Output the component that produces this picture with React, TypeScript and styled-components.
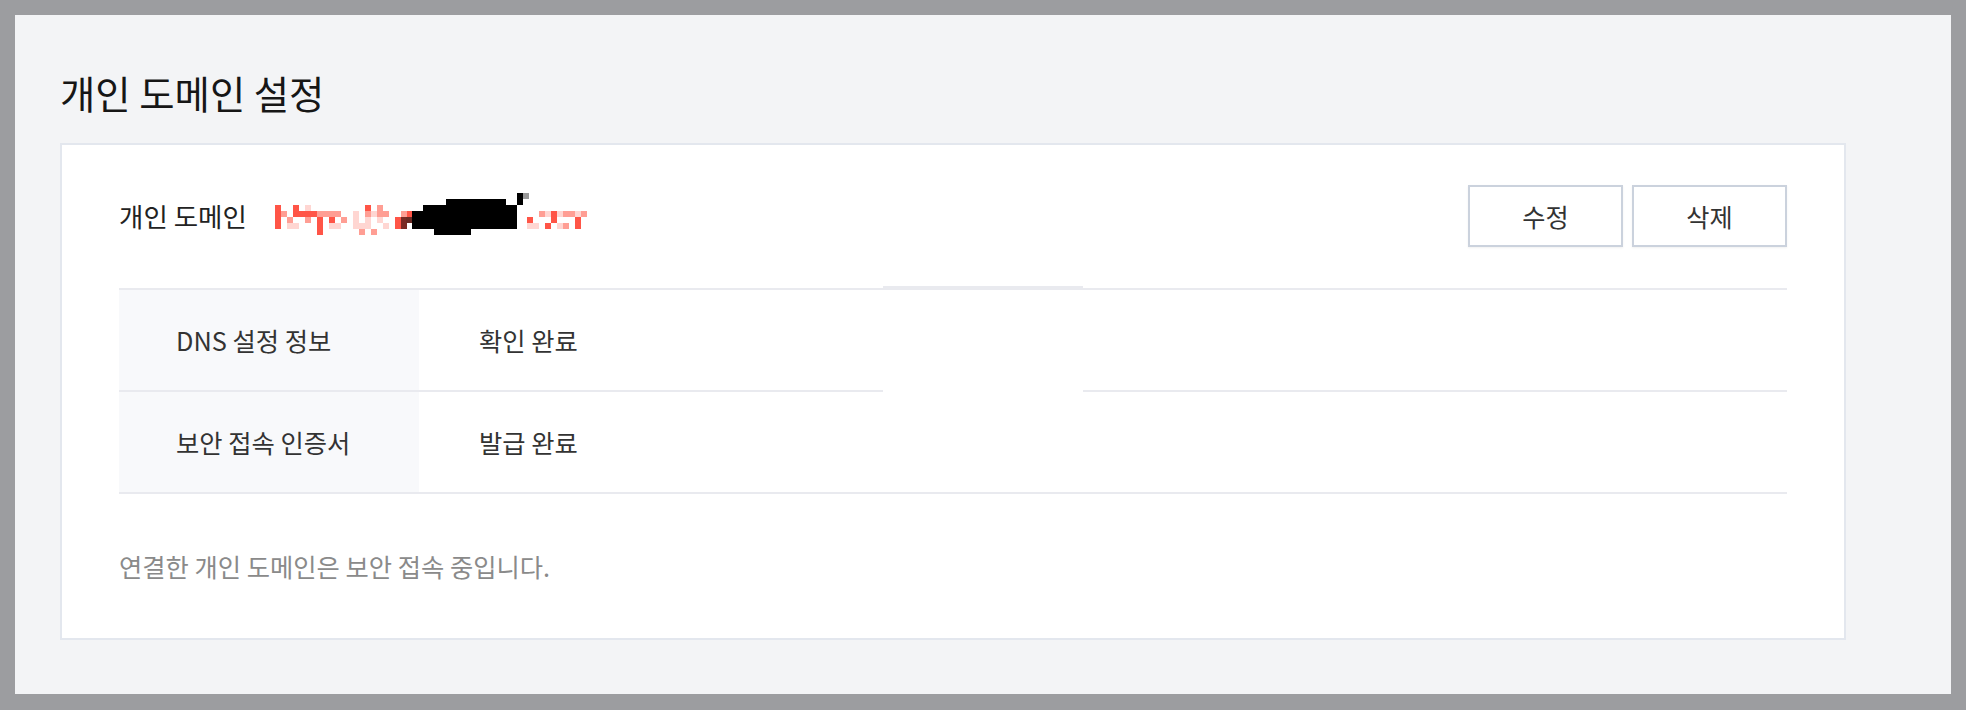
import React from "react";
import styled, { createGlobalStyle } from "styled-components";

const GlobalStyle = createGlobalStyle`
  html, body {
    margin: 0;
    padding: 0;
    background: #9c9da0;
  }
  body {
    font-family: "Noto Sans CJK KR", "Noto Sans", sans-serif;
    color: #333;
  }
  * { box-sizing: border-box; }
`;

const Frame = styled.main`
  margin: 15px 15px 16px 15px;
  height: 679px;
  background: #f3f4f6;
  padding: 49px 105px 0 45px;
`;

const Title = styled.h1`
  margin: 0;
  font-size: 38.4px;
  font-weight: 400;
  line-height: 56px;
  color: #161616;
`;

const Card = styled.section`
  position: relative;
  margin-top: 23px;
  height: 497px;
  background: #fff;
  border: 2px solid #e3e7ee;
  padding: 40px 57px 0 57px;
`;

const HeaderRow = styled.div`
  display: flex;
  align-items: center;
  justify-content: space-between;
  height: 62px;
`;

const DomainInfo = styled.div`
  display: flex;
  align-items: center;
  gap: 28px;
`;

const Label = styled.span`
  font-size: 26.5px;
  color: #222;
  line-height: 36px;
`;

const Actions = styled.div`
  display: flex;
  gap: 9px;
`;

const Button = styled.button`
  width: 155px;
  height: 62px;
  background: #fff;
  border: 2px solid #cbd2dd;
  box-shadow: 0 1px 2px rgba(0, 0, 0, 0.06);
  font-family: inherit;
  font-size: 25.2px;
  color: #333;
  cursor: pointer;
  padding: 0;
`;

const Table = styled.div`
  margin-top: 41px;
  border-top: 2px solid #e9eaef;
`;

const Row = styled.div`
  display: grid;
  grid-template-columns: 300px 1fr;
  height: 102px;
  border-bottom: 2px solid #e9eaef;
`;

const HeadCell = styled.div`
  display: flex;
  align-items: center;
  padding-left: 57px;
  background: #f8f9fb;
  font-size: 25.3px;
  color: #333;
`;

const ValueCell = styled.div`
  display: flex;
  align-items: center;
  padding-left: 60px;
  font-size: 25.3px;
  color: #333;
`;

const Note = styled.p`
  margin: 55px 0 0 0;
  font-size: 25.3px;
  line-height: 34px;
  color: #8a8a8a;
`;

const Patch = styled.div`
  position: absolute;
  left: 821px;
  top: 141px;
  width: 200px;
  height: 107px;
  background: #fff;
  border-top: 4px solid #e9eaef;
`;

const R = "#ff5547";
const Rm = "#ff9e94";
const P = "#ffd6d2";
const D = "#7a2a24";

const grid = [
  "R..R.p.........R.r..................................",
  "Rr.RRRRrrrr..p.rprr..rR.....................rpRprrpr",
  "R.r..r.R.R.r.p.p.p..RD....................R...R...R.",
  "R.pp...R.pp..ppp..p.RD....................pp.R.pr.R.",
  ".......R......r.r...................................",
];

const colorOf = (c: string) =>
  c === "R" ? R : c === "r" ? Rm : c === "p" ? P : c === "D" ? D : null;

const Redacted = () => {
  const cells: React.ReactNode[] = [];
  grid.forEach((row, ri) => {
    row.split("").forEach((ch, ci) => {
      const fill = colorOf(ch);
      if (fill) {
        cells.push(
          <rect key={`${ri}-${ci}`} x={ci * 6} y={12 + ri * 6} width={6} height={6} fill={fill} />
        );
      }
    });
  });
  return (
    <svg width="314" height="46" viewBox="0 0 314 46" aria-label="redacted domain">
      {cells}
      <rect x="171" y="6" width="60" height="6" fill="#000" />
      <rect x="148" y="12" width="94" height="6" fill="#000" />
      <rect x="137" y="18" width="105" height="18" fill="#000" />
      <rect x="159" y="36" width="37" height="6" fill="#000" />
      <rect x="242" y="0" width="6" height="12" fill="#000" />
      <rect x="248" y="0" width="6" height="6" fill="#999" />
      <rect x="131" y="24" width="6" height="6" fill="#6b2a24" />
    </svg>
  );
};

const rows = [
  { head: "DNS 설정 정보", value: "확인 완료" },
  { head: "보안 접속 인증서", value: "발급 완료" },
];

export default function App() {
  return (
    <>
      <GlobalStyle />
      <Frame>
        <Title>개인 도메인 설정</Title>
        <Card>
          <HeaderRow>
            <DomainInfo>
              <Label>개인 도메인</Label>
              <Redacted />
            </DomainInfo>
            <Actions>
              <Button>수정</Button>
              <Button>삭제</Button>
            </Actions>
          </HeaderRow>
          <Table>
            {rows.map((r) => (
              <Row key={r.head}>
                <HeadCell>{r.head}</HeadCell>
                <ValueCell>{r.value}</ValueCell>
              </Row>
            ))}
          </Table>
          <Note>연결한 개인 도메인은 보안 접속 중입니다.</Note>
          <Patch />
        </Card>
      </Frame>
    </>
  );
}
